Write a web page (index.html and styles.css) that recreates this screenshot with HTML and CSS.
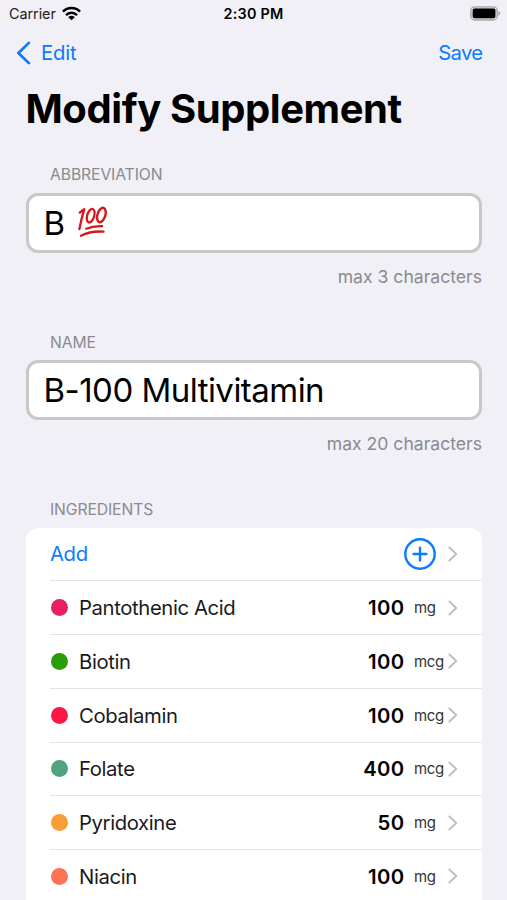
FILE: index.html
```html
<!DOCTYPE html>
<html lang="en">
<head>
<meta charset="utf-8">
<title>Modify Supplement</title>
<link rel="stylesheet" href="styles.css">
</head>
<body>
<svg class="defs" width="0" height="0" aria-hidden="true">
  <symbol id="chevron" viewBox="0 0 10 16"><path d="M1.4 1.5 8.2 8 1.4 14.5" fill="none" stroke="#bfbfc3" stroke-width="2" stroke-linecap="round" stroke-linejoin="round"/></symbol>
</svg>
<header class="status">
  <div class="carrier"><span class="carrier-name">Carrier</span>
    <svg class="wifi" viewBox="0 0 18 14" width="18" height="14"><g fill="none" stroke="#000" stroke-width="2.4"><path d="M.9 5.2a11.4 11.4 0 0 1 16.2 0"/><path d="M3.8 8.5a7.3 7.3 0 0 1 10.4 0"/></g><path d="M9 13.5 5.9 10.5a4.4 4.4 0 0 1 6.2 0Z"/></svg>
  </div>
  <div class="time">2:30 PM</div>
  <svg class="battery" viewBox="0 0 31 15" width="31" height="15"><rect x=".8" y=".8" width="26.4" height="13.2" rx="3.8" fill="#d2d2d3" stroke="#a9a9ab" stroke-width="1.3"/><rect x="2.7" y="2.6" width="22.7" height="9.6" rx="2"/><path d="M28.3 5.1c2.7 1 2.7 3.8 0 4.8Z" fill="#a9a9ab"/></svg>
</header>
<nav class="nav">
  <a class="back"><svg viewBox="0 0 15 24" width="15" height="24"><path d="M12.9 1.9 2.4 12l10.5 10.1" fill="none" stroke="#0a7aff" stroke-width="2.7" stroke-linecap="round" stroke-linejoin="round"/></svg><span class="edit">Edit</span></a>
  <a class="save">Save</a>
</nav>
<h1 class="title">Modify Supplement</h1>
<main>
  <section class="group">
    <h2 class="label">ABBREVIATION</h2>
    <div class="field"><span>B</span>
      <svg class="hundred" viewBox="0 0 32 32" width="32" height="32" role="img" aria-label="100 points"><g fill="none" stroke="#d9151c" stroke-linecap="round" stroke-linejoin="round"><path d="M2.7 6.6 7.2 3.3Q4.5 12 2.4 23" stroke-width="2.3"/><ellipse cx="13.7" cy="9.7" rx="3.5" ry="7" transform="rotate(17 13.7 9.7)" stroke-width="2.3"/><ellipse cx="24.4" cy="9" rx="3.9" ry="7.5" transform="rotate(17 24.4 9)" stroke-width="2.4"/><path d="M9.2 22.7q7-3 16-2.6" stroke-width="2.2"/><path d="M4 29.7q10-5 22.5-4.1" stroke-width="2.4"/></g></svg>
    </div>
    <p class="hint">max 3 characters</p>
  </section>
  <section class="group">
    <h2 class="label">NAME</h2>
    <div class="field"><span>B-100 Multivitamin</span></div>
    <p class="hint">max 20 characters</p>
  </section>
  <section>
    <h2 class="label">INGREDIENTS</h2>
    <ul class="card">
      <li class="row add"><span class="add-text">Add</span><svg class="plus" viewBox="0 0 32 32" width="32" height="32"><g fill="none" stroke="#0a7aff" stroke-width="2.4" stroke-linecap="round"><circle cx="16" cy="16" r="14.7"/><path d="M9.6 16h12.8M16 9.6v12.8"/></g></svg><svg class="chev"><use href="#chevron"/></svg></li>
      <li class="row"><i class="dot pink"></i><span class="item">Pantothenic Acid</span><b>100</b><small>mg</small><svg class="chev"><use href="#chevron"/></svg></li>
      <li class="row"><i class="dot green"></i><span class="item">Biotin</span><b>100</b><small>mcg</small><svg class="chev"><use href="#chevron"/></svg></li>
      <li class="row"><i class="dot red"></i><span class="item">Cobalamin</span><b>100</b><small>mcg</small><svg class="chev"><use href="#chevron"/></svg></li>
      <li class="row"><i class="dot teal"></i><span class="item">Folate</span><b>400</b><small>mcg</small><svg class="chev"><use href="#chevron"/></svg></li>
      <li class="row"><i class="dot orange"></i><span class="item">Pyridoxine</span><b>50</b><small>mg</small><svg class="chev"><use href="#chevron"/></svg></li>
      <li class="row"><i class="dot coral"></i><span class="item">Niacin</span><b>100</b><small>mg</small><svg class="chev"><use href="#chevron"/></svg></li>
    </ul>
  </section>
</main>
</body>
</html>
```
FILE: styles.css
```css
* { box-sizing: border-box; }
html { height: 900px; overflow: hidden; }
body { margin: 0; width: 507px; height: 900px; overflow: hidden; background: #f1f0f6; color: #000; font-family: Inter, "Liberation Sans", sans-serif; }
h1, h2, p, ul { margin: 0; padding: 0; font-weight: 400; }
svg { display: block; flex: none; }
.defs { position: absolute; }
.status { display: grid; grid-template-columns: 1fr auto 1fr; align-items: center; height: 28px; padding: 0 6px 0 9px; font-size: 14.4px; }
.carrier { display: flex; align-items: center; gap: 6px; color: #222; }
.carrier-name { margin-bottom: 1px; letter-spacing: -0.05px; }
.wifi { width: 19px; height: 15px; margin-bottom: 1px; }
.time { margin: 0 3px 1px 0; font-weight: 600; letter-spacing: 0.2px; }
.battery { justify-self: end; margin-bottom: 1px; }
.nav { display: flex; justify-content: space-between; align-items: center; height: 49px; padding: 0 24.5px 0 16px; color: #0a7aff; font-size: 20.3px; }
.back { display: flex; align-items: center; gap: 10px; }
.edit { letter-spacing: -0.2px; }
.save { letter-spacing: -0.65px; }
.title { padding-left: 25.5px; height: 64px; line-height: 64px; font-size: 40px; font-weight: 700; letter-spacing: -0.42px; white-space: nowrap; }
main { padding: 21px 25px 0 25.5px; }
.group { height: 167.5px; }
.label { padding-left: 24.5px; height: 30.5px; line-height: 25px; font-size: 15.7px; letter-spacing: -0.1px; color: #8a8a8f; }
.field { display: flex; align-items: center; gap: 12px; height: 60px; padding-left: 15px; border: 3px solid #c8c8c9; border-radius: 12px; background: #fff; font-size: 33px; letter-spacing: -0.53px; }
.hundred { margin-bottom: 2px; }
.hint { text-align: right; line-height: 47px; font-size: 17.6px; color: #8a8a8f; }
.card { list-style: none; background: #fff; border-radius: 12px 12px 0 0; padding-left: 24.5px; }
.row { display: flex; align-items: center; height: 53.75px; padding-right: 24px; border-bottom: 1px solid #e3e3e5; font-size: 20.3px; }
.add { color: #0a7aff; }
.add-text, .item { flex: 1; letter-spacing: -0.38px; }
.plus { margin-right: 12px; }
.chev { width: 10px; height: 16px; }
.dot { width: 17px; height: 17px; border-radius: 50%; margin: 0 11px 0 1px; }
.item { color: #1a1a1c; }
.row b { font-weight: 600; letter-spacing: 0.3px; }
.row small { width: 34px; margin-left: 9.7px; font-size: 15px; letter-spacing: -0.35px; color: #333; }
.pink { background: #e91f63; }
.green { background: #2a9d05; }
.red { background: #fc1744; }
.teal { background: #52a380; }
.orange { background: #f89e37; }
.coral { background: #fc7353; }
```
